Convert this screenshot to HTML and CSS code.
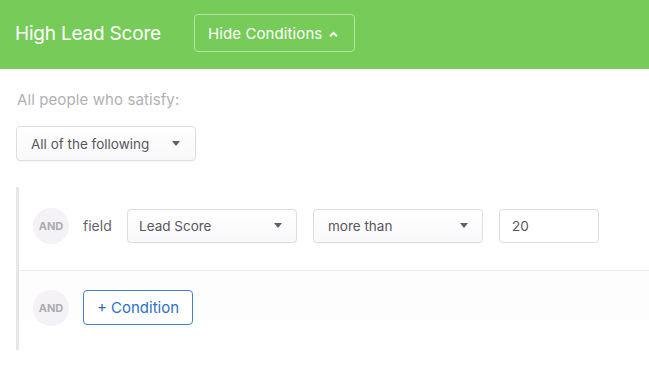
FILE: index.html
```html
<!DOCTYPE html>
<html>
<head>
<meta charset="utf-8">
<link rel="stylesheet" href="styles.css">
</head>
<body>
<header class="topbar">
  <h1 class="title">High Lead Score</h1>
  <button class="toggle">Hide Conditions
    <svg class="chev" width="11" height="8" viewBox="0 0 11 8"><path d="M2 6.2 L5.5 2.8 L9 6.2" fill="none" stroke="#fff" stroke-width="2"/></svg>
  </button>
</header>
<main class="content">
  <p class="lead">All people who satisfy:</p>
  <div class="select select-all">All of the following<span class="caret"></span></div>
  <section class="panel">
    <div class="row row-first">
      <span class="and">AND</span>
      <span class="label">field</span>
      <div class="select select-field">Lead Score<span class="caret"></span></div>
      <div class="select select-op">more than<span class="caret"></span></div>
      <div class="input">20</div>
    </div>
    <div class="row row-second">
      <span class="and">AND</span>
      <button class="add">+ Condition</button>
    </div>
  </section>
</main>
</body>
</html>
```
FILE: styles.css
```css
* { box-sizing: border-box; }
body {
  margin: 0;
  background: #fff;
  font-family: Inter, "Liberation Sans", sans-serif;
  width: 649px;
  height: 374px;
  overflow: hidden;
}
.topbar {
  height: 69px;
  background: #77cb59;
  display: flex;
  align-items: center;
  padding-left: 15px;
}
.title {
  margin: 0;
  font-weight: 400;
  font-size: 19px;
  color: #fff;
  letter-spacing: -0.2px;
  width: 179px;
  position: relative;
  top: -1px;
}
.toggle {
  height: 38px;
  width: 161px;
  margin-top: -3px;
  border: 1px solid #b3e6a0;
  border-radius: 4px;
  background: transparent;
  color: #fff;
  font-family: inherit;
  font-size: 15px;
  letter-spacing: 0.1px;
  display: flex;
  align-items: center;
  padding: 0 0 0 13px;
  gap: 6px;
}
.chev { margin-top: 1px; }
.content {
  padding: 21px 0 0 16px;
}
.lead {
  margin: 0 0 0 1px;
  font-size: 15px;
  color: #b2b0b6;
  line-height: 20px;
  letter-spacing: 0.1px;
}
.select {
  display: flex;
  align-items: center;
  justify-content: space-between;
  border: 1px solid #dedce2;
  border-radius: 4px;
  background: linear-gradient(#fff, #f9f8fa);
  box-shadow: 0 1px 1px rgba(0,0,0,0.03);
  color: #58565c;
  font-size: 13.5px;
  padding: 0 14px 0 14px;
}
.caret {
  width: 0; height: 0;
  border-left: 4.5px solid transparent;
  border-right: 4.5px solid transparent;
  border-top: 5px solid #606066;
}
.select-all {
  margin-top: 16px;
  width: 180px;
  height: 35px;
  padding-right: 15px;
}
.panel {
  margin-top: 26px;
  border-left: 3px solid #e8e6ec;
  background: #fff;
  height: 163px;
}
.row {
  display: flex;
  align-items: center;
  padding-left: 14px;
}
.row-first {
  height: 84px;
  border-bottom: 1px solid #ecebee;
  padding-bottom: 6px;
}
.row-second {
  height: 79px;
  padding-bottom: 6px;
  background: linear-gradient(#fdfdfd, #fdfdfd 62%, #fff 62%);
}
.and {
  width: 36px; height: 36px;
  border-radius: 50%;
  background: #f4f2f6;
  color: #aeacb2;
  font-size: 11px;
  font-weight: 700;
  display: flex;
  align-items: center;
  justify-content: center;
}
.label {
  margin-left: 14px;
  width: 44px;
  font-size: 14px;
  color: #666469;
}
.select-field { width: 170px; height: 34px; padding-left: 11px; }
.select-op { width: 170px; height: 34px; margin-left: 16px; }
.input {
  margin-left: 16px;
  width: 100px; height: 34px;
  border: 1px solid #dedce2;
  border-radius: 4px;
  background: #fff;
  color: #58565c;
  font-size: 13.5px;
  display: flex;
  align-items: center;
  padding-left: 12px;
}
.add {
  margin-left: 14px;
  width: 110px;
  height: 35px;
  border: 1px solid #3f7fd4;
  border-radius: 4px;
  background: #fff;
  color: #2f6fc8;
  font-family: inherit;
  font-size: 15px;
  padding: 0;
}
```
